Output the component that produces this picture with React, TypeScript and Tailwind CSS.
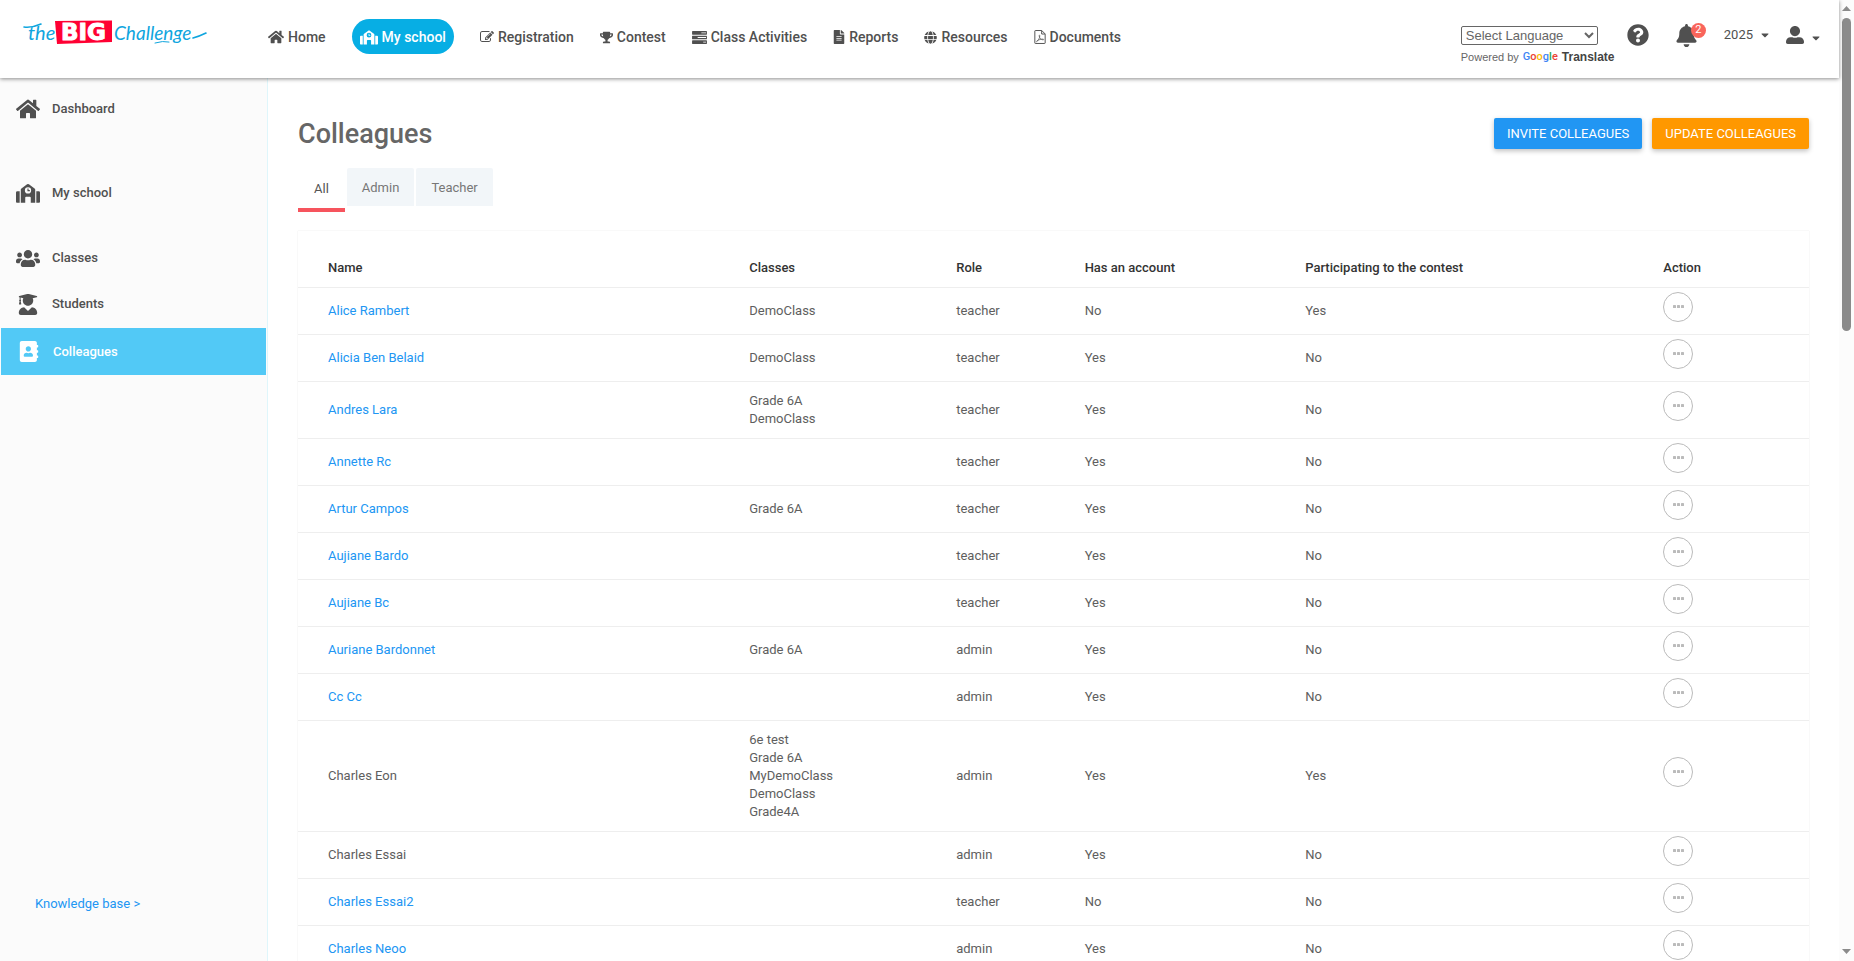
import React from 'react';
import {
  FaAddressBook,
  FaBell,
  FaCaretDown,
  FaFileAlt,
  FaGlobe,
  FaHome,
  FaQuestionCircle,
  FaTrophy,
  FaUserAlt,
  FaUserGraduate,
  FaUsers,
} from 'react-icons/fa';

interface IconProps {
  className?: string;
}

interface Colleague {
  name: string;
  link?: boolean;
  classes: string[];
  role: string;
  account: string;
  contest: string;
}

const colleagues: Colleague[] = [
  { name: 'Alice Rambert', link: true, classes: ['DemoClass'], role: 'teacher', account: 'No', contest: 'Yes' },
  { name: 'Alicia Ben Belaid', link: true, classes: ['DemoClass'], role: 'teacher', account: 'Yes', contest: 'No' },
  { name: 'Andres Lara', link: true, classes: ['Grade 6A', 'DemoClass'], role: 'teacher', account: 'Yes', contest: 'No' },
  { name: 'Annette Rc', link: true, classes: [], role: 'teacher', account: 'Yes', contest: 'No' },
  { name: 'Artur Campos', link: true, classes: ['Grade 6A'], role: 'teacher', account: 'Yes', contest: 'No' },
  { name: 'Aujiane Bardo', link: true, classes: [], role: 'teacher', account: 'Yes', contest: 'No' },
  { name: 'Aujiane Bc', link: true, classes: [], role: 'teacher', account: 'Yes', contest: 'No' },
  { name: 'Auriane Bardonnet', link: true, classes: ['Grade 6A'], role: 'admin', account: 'Yes', contest: 'No' },
  { name: 'Cc Cc', link: true, classes: [], role: 'admin', account: 'Yes', contest: 'No' },
  {
    name: 'Charles Eon',
    classes: ['6e test', 'Grade 6A', 'MyDemoClass', 'DemoClass', 'Grade4A'],
    role: 'admin',
    account: 'Yes',
    contest: 'Yes',
  },
  { name: 'Charles Essai', classes: [], role: 'admin', account: 'Yes', contest: 'No' },
  { name: 'Charles Essai2', link: true, classes: [], role: 'teacher', account: 'No', contest: 'No' },
  { name: 'Charles Neoo', link: true, classes: [], role: 'admin', account: 'Yes', contest: 'No' },
];

const SchoolIcon = ({ className }: IconProps) => (
  <svg viewBox="0 0 26 21" fill="currentColor" className={className} aria-hidden="true">
    <path d="M0 9.400Q0 8 1.400 8H4v12.500H1Q0 20.500 0 19.500zM22 8h2.600Q26 8 26 9.400v10.100q0 1-1 1h-3z" />
    <path
      fillRule="evenodd"
      d="M5.200 6.300q0-.8.700-1.300L12 .6q1-.8 2 0L20.100 5q.7.500.7 1.300V20.500H16V15q0-1-1-1h-4q-1 0-1 1v5.500H5.200zM13 3.800a3.400 3.400 0 1 0 0 6.800 3.400 3.400 0 0 0 0-6.800zM12.400 5h1.200v1.800H15V8h-2.600z"
    />
  </svg>
);

const TasksIcon = ({ className }: IconProps) => (
  <svg viewBox="0 0 16 14" fill="currentColor" className={className} aria-hidden="true">
    <path
      fillRule="evenodd"
      d="M.5 0h15q.5 0 .5.500v3q0 .5-.5.500H.500Q0 4 0 3.500v-3Q0 0 .500 0zM10 1.500v1h5v-1zM.5 5h15q.5 0 .5.500v3q0 .5-.5.500H.500Q0 9 0 8.500v-3Q0 5 .500 5zM6 6.500v1h9v-1zM.5 10h15q.5 0 .5.500v3q0 .5-.5.500H.500q-.5 0-.5-.5v-3q0-.5.500-.5zM12 11.500v1h3v-1z"
    />
  </svg>
);

const EditIcon = ({ className }: IconProps) => (
  <svg viewBox="0 128 1792 1536" fill="currentColor" className={className} aria-hidden="true">
    <path d="M888 1184l116-116-152-152-116 116v56h96v96h56zm440-720q-16-16-33 1l-350 350q-17 17-1 33t33-1l350-350q17-17 1-33zm80 594v190q0 119-84.500 203.500t-203.500 84.500h-832q-119 0-203.500-84.500t-84.500-203.500v-832q0-119 84.500-203.500t203.500-84.500h832q63 0 117 25 15 7 18 23 3 17-9 29l-49 49q-14 14-32 8-23-6-45-6h-832q-66 0-113 47t-47 113v832q0 66 47 113t113 47h832q66 0 113-47t47-113v-126q0-13 9-22l64-64q15-15 35-7t20 29zm-96-738l288 288-672 672h-288v-288zm444 132l-92 92-288-288 92-92q28-28 68-28t68 28l152 152q28 28 28 68t-28 68z" />
  </svg>
);

const PdfIcon = ({ className }: IconProps) => (
  <svg
    viewBox="0 0 13 16"
    fill="none"
    stroke="currentColor"
    strokeLinejoin="round"
    className={className}
    aria-hidden="true"
  >
    <path d="M1.200 .6h7.300l3.900 3.900v10.300q0 .6-.6.600H1.200q-.6 0-.6-.6V1.200q0-.6.600-.6zM8.400.800v3.800h3.800" strokeWidth="1.100" />
    <path d="M2.700 13.400c1.800-1.300 3.600-4.300 3.600-6.800 0-1-.9-1-.8 0 .3 2.600 2.200 4.600 4.500 4.700 1 0 .9-.9-.2-.9-2.200 0-5 .8-6.600 1.900-.8.500-.9.900-.5 1.100z" strokeWidth=".8" />
  </svg>
);

const Logo = () => (
  <svg viewBox="0 0 186 34" className="w-[186px] h-[34px]" role="img" aria-label="The Big Challenge">
    <path d="M32 2L89 1.500V23L34 25z" fill="#ff0033" />
    <text x="5" y="21" fontSize="20" className="italic font-['Lato',sans-serif]" fill="#0fa5de">
      the
    </text>
    <text
      x="38"
      y="21"
      fontSize="23"
      className="font-bold font-['DejaVu_Sans',sans-serif]"
      fill="#fff"
      stroke="#fff"
      strokeWidth="1"
    >
      BIG
    </text>
    <text x="91" y="21" fontSize="19" className="italic font-['Lato',sans-serif]" fill="#0fa5de">
      Challenge
    </text>
    <g fill="none" stroke="#0fa5de" strokeLinecap="round">
      <path d="M1 8Q9 9 18 5" strokeWidth="1.600" />
      <path d="M170 19Q177 17 183 14" strokeWidth="1.600" />
      <path d="M132 24q8-2.500 14-1" strokeWidth="1" />
    </g>
  </svg>
);

const navItems = [
  { title: 'Home', icon: <FaHome className="size-4" /> },
  { title: 'My school', icon: <SchoolIcon className="w-[18px] h-[15px]" />, active: true },
  { title: 'Registration', icon: <EditIcon className="w-[14px] h-3" /> },
  { title: 'Contest', icon: <FaTrophy className="size-[13px]" /> },
  { title: 'Class Activities', icon: <TasksIcon className="w-[15px] h-[13px]" /> },
  { title: 'Reports', icon: <FaFileAlt className="w-3 h-[14px]" /> },
  { title: 'Resources', icon: <FaGlobe className="size-[13px]" /> },
  { title: 'Documents', icon: <PdfIcon className="w-3 h-[14px]" /> },
];

const Header = () => (
  <header className="relative z-10 flex h-[78px] shrink-0 items-start bg-white pl-[23px] pr-[17px] shadow-[0_1px_4px_rgba(0,0,0,0.45)]">
    <a href="#home" className="mt-[19px] shrink-0">
      <Logo />
    </a>
    <nav className="ml-[51px] mt-[19px] flex grow items-center text-[14px] font-medium">
      {navItems.map((item) => (
        <a
          key={item.title}
          href="#nav"
          className={
            item.active
              ? 'mx-[18px] flex h-[35px] items-center gap-1 rounded-full bg-[#07aee4] px-2 pt-px text-white'
              : 'flex h-[35px] items-center gap-1 whitespace-nowrap px-2 pt-px mr-[10px] first:mr-0'
          }
        >
          {item.icon}
          {item.title}
        </a>
      ))}
    </nav>
    <div className="mt-[26px] flex w-[155px] shrink-0 flex-col font-['Liberation_Sans',Arial,sans-serif] text-[#666]">
      <select
        aria-label="Select Language"
        className="h-[19px] w-[137px] rounded-xs border border-[#666] bg-white text-[13px] text-[#666]"
      >
        <option>Select Language</option>
      </select>
      <div className="mt-1 flex items-center gap-1 text-[11px] leading-4">
        <span>Powered by</span>
        <span className="font-['Roboto',sans-serif] text-[11px] font-medium">
          <span className="text-[#4285f4]">G</span>
          <span className="text-[#ea4335]">o</span>
          <span className="text-[#fbbc05]">o</span>
          <span className="text-[#4285f4]">g</span>
          <span className="text-[#34a853]">l</span>
          <span className="text-[#ea4335]">e</span>
        </span>
        <span className="text-xs font-bold text-[#444]">Translate</span>
      </div>
    </div>
    <div className="mt-6 flex shrink-0 items-start">
      <button aria-label="Help" className="ml-[11px]">
        <FaQuestionCircle className="size-[22px]" />
      </button>
      <button aria-label="Notifications" className="relative ml-[27px]">
        <FaBell className="w-[21px] h-[23px]" />
        <span className="absolute -top-px left-[15px] flex size-[15px] items-center justify-center rounded-full bg-[#f9655b] text-[11px] text-white">
          2
        </span>
      </button>
      <button className="ml-[27px] flex h-[22px] items-center gap-[6px] text-[13px]">
        2025
        <FaCaretDown className="size-3" />
      </button>
      <button aria-label="Account" className="ml-[15px] mt-[2px] flex items-end gap-[6px]">
        <FaUserAlt className="size-[18px]" />
        <FaCaretDown className="size-3" />
      </button>
    </div>
  </header>
);

const Sidebar = () => (
  <aside className="flex w-[268px] shrink-0 flex-col border-r border-[#dff6fb] bg-[#fbfbfb] text-[13px] font-medium">
    <a href="#dashboard" className="mt-2 flex h-[46px] items-center gap-3 pl-4">
      <FaHome className="w-6 h-[22px]" />
      Dashboard
    </a>
    <a href="#school" className="mt-[38px] flex h-[46px] items-center gap-3 pl-4">
      <SchoolIcon className="w-6 h-[21px]" />
      My school
    </a>
    <a href="#classes" className="mt-[19px] flex h-[46px] items-center gap-3 pl-4">
      <FaUsers className="w-6 h-[21px]" />
      Classes
    </a>
    <a href="#students" className="flex h-[46px] items-center gap-3 pl-4">
      <FaUserGraduate className="w-6 h-[21px]" />
      Students
    </a>
    <a href="#colleagues" className="mx-px mt-px flex h-[47px] items-center gap-3 bg-[#52c9f6] pl-4 text-white">
      <FaAddressBook className="w-6 h-[21px]" />
      Colleagues
    </a>
    <a href="#knowledge" className="mt-auto mb-[48px] pl-[35px] font-normal leading-[18px] text-[#2196f3]">
      Knowledge base &gt;
    </a>
  </aside>
);

const ColleagueTable = () => (
  <table className="mt-[19px] w-full table-fixed text-left text-[13px] leading-[18px] shadow-[0_0_1px_rgba(0,0,0,0.15)]">
    <colgroup>
      <col className="w-[29.2%]" />
      <col className="w-[13.7%]" />
      <col className="w-[8.5%]" />
      <col className="w-[14.6%]" />
      <col className="w-[23.7%]" />
      <col />
    </colgroup>
    <thead>
      <tr className="h-[56px] text-[#333]">
        <th className="pl-[30px] pt-[18px] font-medium">Name</th>
        <th className="pl-[10px] pt-[18px] font-medium">Classes</th>
        <th className="pl-[10px] pt-[18px] font-medium">Role</th>
        <th className="pl-[10px] pt-[18px] font-medium">Has an account</th>
        <th className="pl-[10px] pt-[18px] font-medium">Participating to the contest</th>
        <th className="pl-[10px] pt-[18px] font-medium">Action</th>
      </tr>
    </thead>
    <tbody>
      {colleagues.map((item) => (
        <tr key={item.name} className="border-t border-[#eee]">
          <td className="pl-[30px]">
            {item.link ? (
              <a href="#colleague" className="text-[#2196f3]">
                {item.name}
              </a>
            ) : (
              item.name
            )}
          </td>
          <td className="py-[10px] pl-[10px]">
            {item.classes.map((title) => (
              <div key={title}>{title}</div>
            ))}
          </td>
          <td className="pl-[10px]">{item.role}</td>
          <td className="pl-[10px]">{item.account}</td>
          <td className="pl-[10px]">{item.contest}</td>
          <td className="pb-3 pl-[10px] pt-1">
            <button
              aria-label={`Actions for ${item.name}`}
              className="flex size-[30px] items-center justify-center rounded-full border border-[#bbb] text-[#bbb]"
            >
              <svg viewBox="0 0 11 3" className="w-[11px] h-[3px]" fill="currentColor" aria-hidden="true">
                <rect width="3" height="3" rx=".6" />
                <rect x="4" width="3" height="3" rx=".6" />
                <rect x="8" width="3" height="3" rx=".6" />
              </svg>
            </button>
          </td>
        </tr>
      ))}
    </tbody>
  </table>
);

const Scrollbar = () => (
  <div className="flex w-[15px] shrink-0 flex-col items-center bg-[#fcfcfc] text-[#8b8b8b]" aria-hidden="true">
    <svg viewBox="0 0 9 5" className="mt-[6px] w-[9px] h-[5px]" fill="currentColor">
      <path d="M4.500 0L9 5H0z" />
    </svg>
    <div className="mt-[7px] h-[32.6%] w-[9px] rounded-full bg-[#8b8b8b]"></div>
    <svg viewBox="0 0 9 5" className="mb-[7px] mt-auto w-[9px] h-[5px]" fill="currentColor">
      <path d="M4.500 5L9 0H0z" />
    </svg>
  </div>
);

const App = () => {
  return (
    <div className="flex h-screen overflow-hidden bg-white font-['Roboto',sans-serif] text-[#505050]">
      <div className="flex min-w-0 grow flex-col">
        <Header />
        <div className="flex min-h-0 grow">
          <Sidebar />
          <main className="min-w-0 grow overflow-hidden px-[30px] text-[#5e5e5e]">
            <div className="mt-10 flex items-start justify-between">
              <h1 className="text-[27px] font-medium leading-8 text-[#666]">Colleagues</h1>
              <div className="flex gap-[10px] text-[13px] uppercase text-white">
                <button className="h-[31px] rounded-xs bg-[#2196f3] px-[13px] shadow-[0_2px_5px_rgba(0,0,0,0.25)]">
                  INVITE COLLEAGUES
                </button>
                <button className="h-[31px] rounded-xs bg-[#ff9800] px-[13px] shadow-[0_2px_5px_rgba(0,0,0,0.25)]">
                  UPDATE COLLEAGUES
                </button>
              </div>
            </div>
            <div className="mt-[18px] flex items-start gap-[2px] text-[13px] text-[#777]">
              <button className="h-11 border-b-4 border-[#f6545d] px-4 pt-px text-[#555]">All</button>
              <button className="h-[38px] rounded-t-xs bg-[#f2f6f9] px-[15px] pt-px">Admin</button>
              <button className="h-[38px] rounded-t-xs bg-[#f2f6f9] px-[15px] pt-px">Teacher</button>
            </div>
            <ColleagueTable />
          </main>
        </div>
      </div>
      <Scrollbar />
    </div>
  );
};

export default App;
